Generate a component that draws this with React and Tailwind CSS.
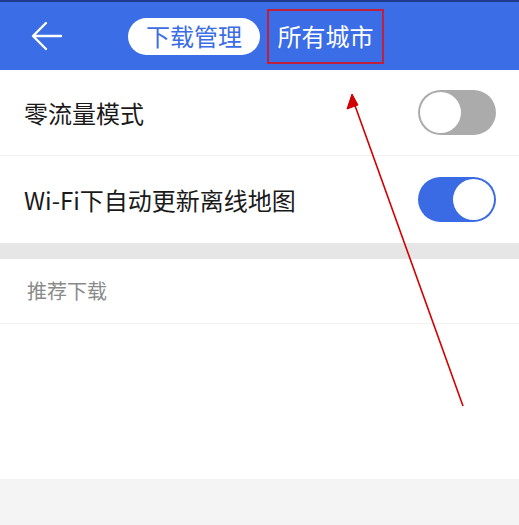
import React, { useState } from 'react';

const font = { fontFamily: '"Noto Sans CJK SC", "Noto Sans", sans-serif' };

function Toggle({ on, onClick }) {
    return (
        <button
            type="button"
            onClick={onClick}
            className={`relative w-[78px] h-[45px] rounded-full flex items-center p-[2px] ${on ? 'bg-[#3b6be4] justify-end' : 'bg-[#ababab] justify-start'}`}
        >
            <span className="block w-[41px] h-[41px] rounded-full bg-white"></span>
        </button>
    );
}

export default function App() {
    const [zeroFlow, setZeroFlow] = useState(false);
    const [wifiUpdate, setWifiUpdate] = useState(true);

    return (
        <div className="relative w-[519px] h-[525px] bg-[#f4f4f4] overflow-hidden" style={font}>
            {/* Header */}
            <div className="h-[70px] bg-[#3b6de6] border-t-2 border-[#1e3c8c] flex items-center">
                <svg className="ml-[31px] w-[32px] h-[30px]" viewBox="0 0 32 30" fill="none" stroke="white" strokeWidth="2.4" strokeLinecap="round" strokeLinejoin="round">
                    <path d="M30 15H3M15 2L2 15l13 13" />
                </svg>
                <div className="ml-[65px] h-[37px] w-[132px] rounded-full bg-white flex items-center justify-center text-[24px] text-[#3b6de6] leading-none">
                    下载管理
                </div>
                <div className="ml-[7px] h-[55px] w-[117px] border-2 border-[#c0203c] flex items-center justify-center text-[24px] text-white leading-none">
                    所有城市
                </div>
            </div>

            {/* Settings */}
            <div className="bg-white">
                <div className="h-[86px] flex items-center justify-between pl-[24px] pr-[23px] border-b border-[#f1f1f1]">
                    <span className="text-[24px] text-[#1a1a1a]">零流量模式</span>
                    <Toggle on={zeroFlow} onClick={() => setZeroFlow(!zeroFlow)} />
                </div>
                <div className="h-[87px] flex items-center justify-between pl-[24px] pr-[23px]">
                    <span className="text-[24px] text-[#1a1a1a]">Wi-Fi下自动更新离线地图</span>
                    <Toggle on={wifiUpdate} onClick={() => setWifiUpdate(!wifiUpdate)} />
                </div>
            </div>

            <div className="h-[16px] bg-[#e6e6e6]"></div>

            {/* Recommended */}
            <div className="bg-white h-[220px]">
                <div className="h-[65px] flex items-center pl-[27px] border-b border-[#f1f1f1]">
                    <span className="text-[20px] text-[#8a8a8a]">推荐下载</span>
                </div>
            </div>

            {/* Annotation arrow */}
            <svg className="absolute left-0 top-0 pointer-events-none" width="519" height="525" viewBox="0 0 519 525">
                <line x1="463" y1="406" x2="353" y2="100" stroke="#d40000" strokeWidth="1.6" />
                <path d="M352 94 L347 109 L358 105 Z" fill="#d40000" stroke="#d40000" strokeWidth="1" />
            </svg>
        </div>
    );
}
